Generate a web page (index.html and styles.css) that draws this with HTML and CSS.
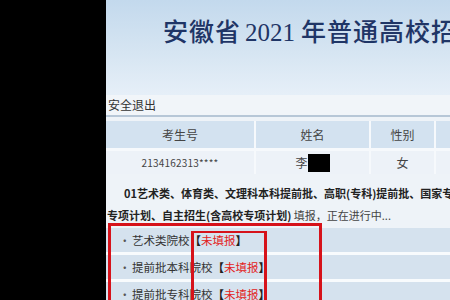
FILE: index.html
```html
<!DOCTYPE html>
<html lang="zh-CN">
<head>
<meta charset="utf-8">
<title>安徽省2021年普通高校招生网上志愿填报系统</title>
<link rel="stylesheet" href="styles.css">
</head>
<body>
<div class="screen">
  <div class="side"></div>
  <div class="main">
    <header class="banner">
      <h1 class="title">安徽省<span class="num">2021</span>年普通高校招生网上志愿填报系统</h1>
    </header>
    <div class="topbar">安全退出</div>
    <div class="info">
      <div class="cell head">考生号</div>
      <div class="cell head">姓名</div>
      <div class="cell head">性别</div>
      <div class="cell head">科类</div>
      <div class="cell data small">2134162313****</div>
      <div class="cell data">李<span class="redact"></span></div>
      <div class="cell data">女</div>
      <div class="cell data"></div>
    </div>
    <div class="notice">
      <p class="line first"><b>01艺术类、体育类、文理科本科提前批、高职(专科)提前批、国家专项计划、地方</b></p>
      <p class="line"><b>专项计划、自主招生(含高校专项计划)</b> <span class="muted">填报，正在进行中...</span></p>
    </div>
    <ul class="list">
      <li class="item"><span class="dot">·</span>艺术类院校<b>【</b><span class="red">未填报</span><b>】</b></li>
      <li class="item"><span class="dot">·</span>提前批本科院校<b>【</b><span class="red">未填报</span><b>】</b></li>
      <li class="item"><span class="dot">·</span>提前批专科院校<b>【</b><span class="red">未填报</span><b>】</b></li>
    </ul>
    <div class="mark mark-outer"></div>
    <div class="mark mark-inner"></div>
  </div>
</div>
</body>
</html>
```

FILE: styles.css
```css
html, body {
  margin: 0;
  padding: 0;
  background: #000;
  overflow: hidden;
  width: 450px;
  height: 300px;
}
.screen {
  display: flex;
  height: 300px;
  font-family: "Noto Sans CJK SC", sans-serif;
  color: #333;
}
.side {
  flex: none;
  width: 106px;
  background: #000;
}
.main {
  flex: none;
  width: 700px;
  position: relative;
  background: #eef3f8;
}
.banner {
  height: 95px;
  background: linear-gradient(to bottom, #c3d9ed 0%, #d6e5f2 55%, #e6eff8 100%);
  box-sizing: border-box;
  padding: 20px 0 0 57px;
}
.title {
  margin: 0;
  font-family: "Liberation Serif", "Noto Sans CJK SC", serif;
  font-size: 25px;
  line-height: 25px;
  font-weight: 500;
  color: #1f3566;
  white-space: nowrap;
  letter-spacing: 1px;
}
.num {
  margin: 0 6px 0 4px;
  letter-spacing: 0;
}
.topbar {
  height: 20px;
  line-height: 20px;
  font-size: 12px;
  padding-left: 2px;
  background: #f1f5f9;
  border-bottom: 2px solid #b7c7d7;
  color: #333;
}
.info {
  display: grid;
  grid-template-columns: 148px 113px 63px 1fr;
  grid-template-rows: 27px 23px;
  column-gap: 2px;
  row-gap: 3px;
  margin-top: 4px;
  background: #f6f9fc;
}
.cell {
  display: flex;
  align-items: center;
  justify-content: center;
  font-size: 12px;
  color: #444;
}
.head {
  background: #d3e2f0;
}
.data {
  background: #edf2f8;
}
.small {
  font-size: 10px;
  letter-spacing: 0.2px;
}
.redact {
  display: inline-block;
  width: 22px;
  height: 18px;
  background: #000;
}
.notice {
  padding-top: 8px;
  padding-left: 1px;
}
.line {
  margin: 0;
  height: 22px;
  line-height: 22px;
  font-size: 11px;
  white-space: nowrap;
  color: #222;
}
.line.first {
  padding-left: 17px;
}
.line b {
  font-weight: 700;
}
.muted {
  font-weight: 400;
  color: #444;
}
.list {
  list-style: none;
  margin: 2px 0 0 0;
  padding: 0;
  display: flex;
  flex-direction: column;
  gap: 3px;
  background: #f8fbfd;
}
.item {
  height: 24px;
  line-height: 24px;
  background: #d5e2ee;
  font-size: 11.5px;
  color: #333;
  padding-left: 13px;
  white-space: nowrap;
}
.dot {
  display: inline-block;
  width: 13px;
  color: #555;
}
.item b {
  font-weight: 700;
  color: #222;
}
.red {
  color: #e32222;
}
.mark {
  position: absolute;
  border: 3px solid #d6121a;
  box-sizing: border-box;
}
.mark-outer {
  left: 2px;
  top: 223px;
  width: 214px;
  height: 100px;
}
.mark-inner {
  left: 85px;
  top: 231px;
  width: 76px;
  height: 100px;
  border-width: 2px 3px 3px 3px;
}
```
